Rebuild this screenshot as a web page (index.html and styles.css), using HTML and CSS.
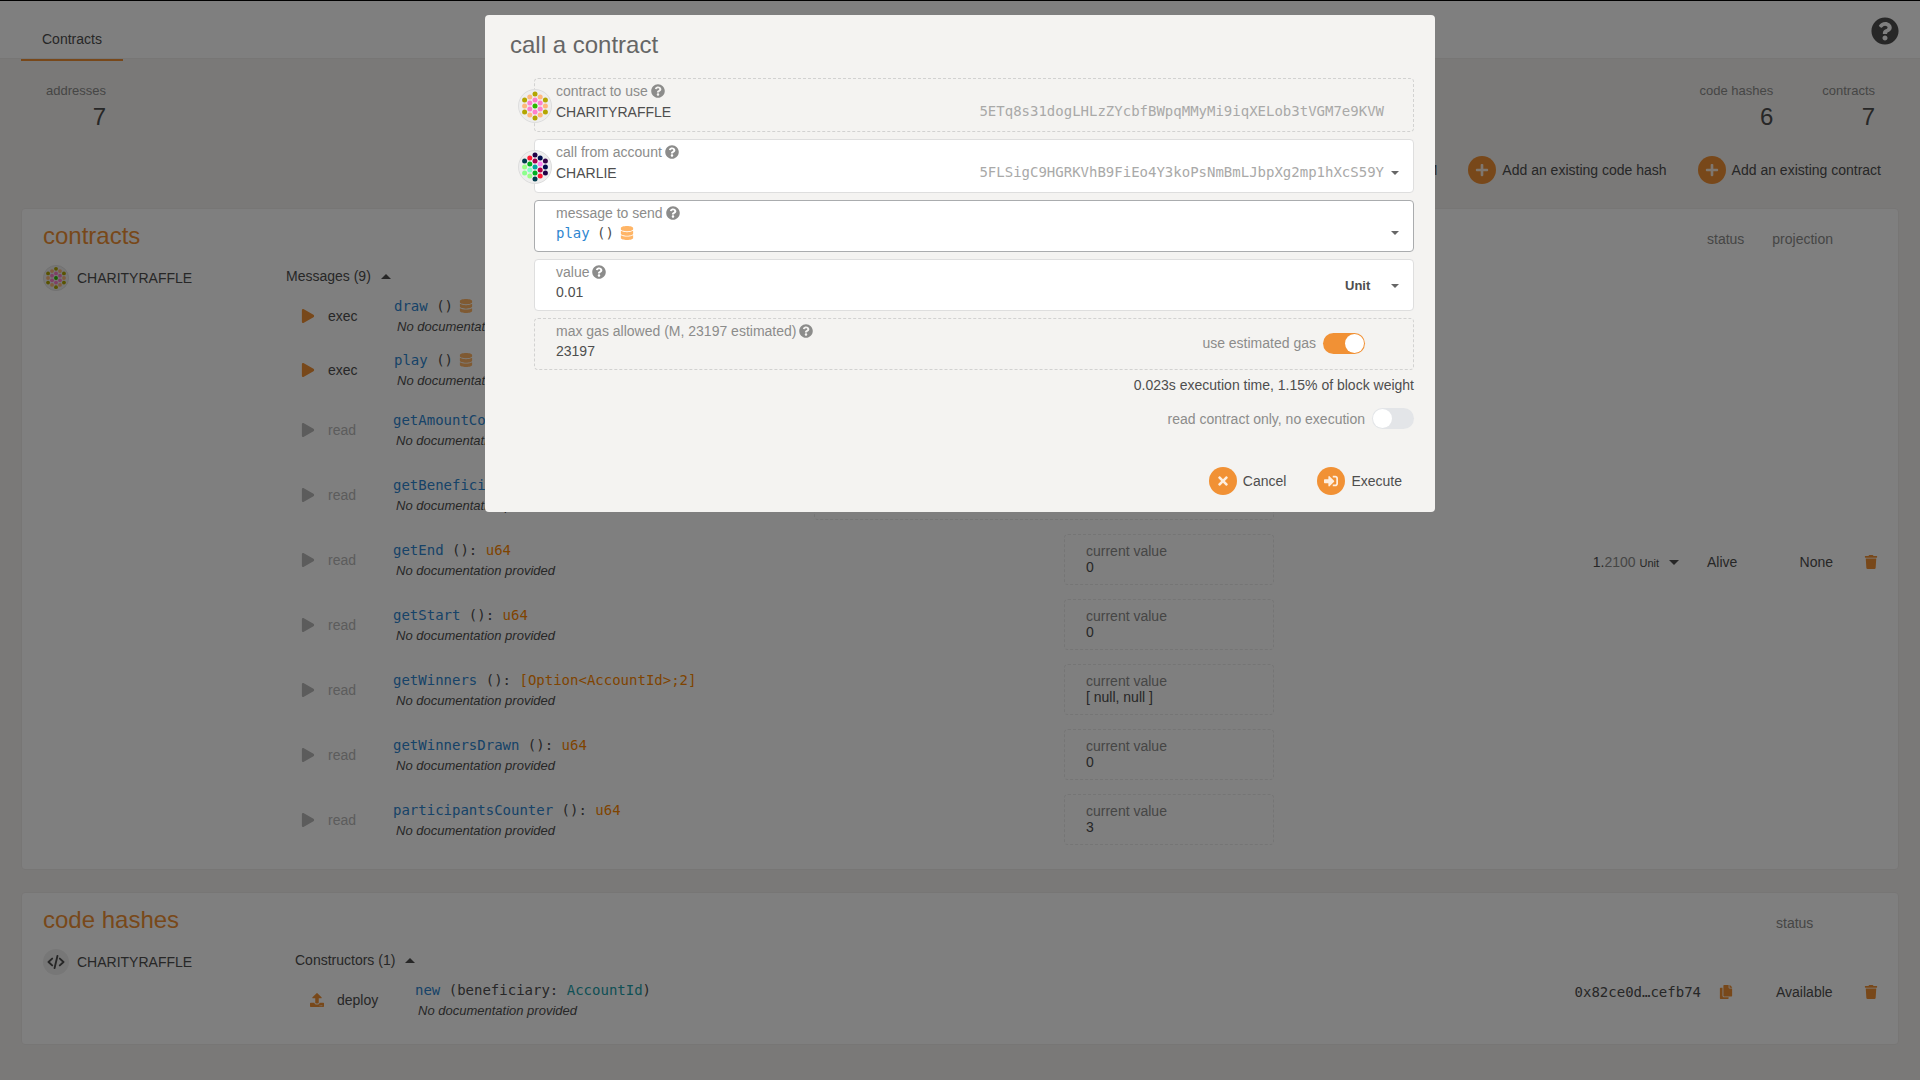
FILE: index.html
```html
<!DOCTYPE html>
<html lang="en">
<head>
<meta charset="utf-8">
<title>Contracts</title>
<link rel="stylesheet" href="styles.css">
</head>
<body>
<svg class="sprite" aria-hidden="true">
  <symbol id="help" viewBox="0 0 512 512"><path d="M504 256c0 136.997-111.043 248-248 248S8 392.997 8 256C8 119.083 119.043 8 256 8s248 111.083 248 248zM262.655 90c-54.497 0-89.255 22.957-116.549 63.758-3.536 5.286-2.353 12.415 2.715 16.258l34.699 26.31c5.205 3.947 12.621 3.008 16.665-2.122 17.864-22.658 30.113-35.797 57.303-35.797 20.429 0 45.698 13.148 45.698 32.958 0 14.976-12.363 22.667-32.534 33.976C247.128 238.528 216 254.941 216 296v4c0 6.627 5.373 12 12 12h56c6.627 0 12-5.373 12-12v-1.333c0-28.462 83.186-29.647 83.186-106.667 0-58.002-60.165-102-116.531-102zM256 338c-25.365 0-46 20.635-46 46 0 25.364 20.635 46 46 46s46-20.636 46-46c0-25.365-20.635-46-46-46z"/></symbol>
  <symbol id="database" viewBox="0 0 448 512"><path d="M448 73.143v45.714C448 159.143 347.667 192 224 192S0 159.143 0 118.857V73.143C0 32.857 100.333 0 224 0s224 32.857 224 73.143zM448 176v102.857C448 319.143 347.667 352 224 352S0 319.143 0 278.857V176c48.125 33.143 136.208 48.572 224 48.572S399.874 209.143 448 176zm0 160v102.857C448 479.143 347.667 512 224 512S0 479.143 0 438.857V336c48.125 33.143 136.208 48.572 224 48.572S399.874 369.143 448 336z"/></symbol>
  <symbol id="play" viewBox="0 0 448 512"><path d="M424.4 214.7L72.4 6.6C43.8-10.3 0 6.1 0 47.9V464c0 37.5 40.7 60.1 72.4 41.3l352-208c31.4-18.5 31.5-64.1 0-82.6z"/></symbol>
  <symbol id="times" viewBox="0 0 352 512"><path d="M242.72 256l100.07-100.07c12.28-12.28 12.28-32.19 0-44.48l-22.24-22.24c-12.28-12.28-32.19-12.28-44.48 0L176 189.28 75.93 89.21c-12.28-12.28-32.19-12.28-44.48 0L9.21 111.45c-12.28 12.28-12.28 32.19 0 44.48L109.28 256 9.21 356.07c-12.28 12.28-12.28 32.19 0 44.48l22.24 22.24c12.28 12.28 32.2 12.28 44.48 0L176 322.72l100.07 100.07c12.28 12.28 32.2 12.28 44.48 0l22.24-22.24c12.28-12.28 12.28-32.19 0-44.48L242.72 256z"/></symbol>
  <symbol id="plus" viewBox="0 0 448 512"><path d="M416 208H272V64c0-17.67-14.33-32-32-32h-32c-17.67 0-32 14.33-32 32v144H32c-17.67 0-32 14.33-32 32v32c0 17.67 14.33 32 32 32h144v144c0 17.67 14.33 32 32 32h32c17.67 0 32-14.33 32-32V304h144c17.67 0 32-14.33 32-32v-32c0-17.67-14.33-32-32-32z"/></symbol>
  <symbol id="sign-in" viewBox="0 0 512 512"><path d="M416 448h-84c-6.6 0-12-5.4-12-12v-40c0-6.6 5.4-12 12-12h84c17.7 0 32-14.3 32-32V160c0-17.7-14.3-32-32-32h-84c-6.6 0-12-5.4-12-12V76c0-6.6 5.4-12 12-12h84c53 0 96 43 96 96v192c0 53-43 96-96 96zm-47-201L201 79c-15-15-41-4.500-41 17v96H24c-13.300 0-24 10.700-24 24v96c0 13.300 10.700 24 24 24h136v96c0 21.500 26 32 41 17l168-168c9.300-9.400 9.300-24.600 0-34z"/></symbol>
  <symbol id="trash" viewBox="0 0 448 512"><path d="M432 32H312l-9.400-18.700A24 24 0 0 0 281.100 0H166.800a23.720 23.720 0 0 0-21.400 13.300L136 32H16A16 16 0 0 0 0 48v32a16 16 0 0 0 16 16h416a16 16 0 0 0 16-16V48a16 16 0 0 0-16-16zM53.200 467a48 48 0 0 0 47.900 45h245.800a48 48 0 0 0 47.900-45L416 128H32z"/></symbol>
  <symbol id="copy" viewBox="0 0 448 512"><path d="M320 448v40c0 13.255-10.745 24-24 24H24c-13.255 0-24-10.745-24-24V120c0-13.255 10.745-24 24-24h72v296c0 30.879 25.121 56 56 56h168zm0-344V0H152c-13.255 0-24 10.745-24 24v368c0 13.255 10.745 24 24 24h272c13.255 0 24-10.745 24-24V128H344c-13.200 0-24-10.800-24-24zm120.971-31.029L375.029 7.029A24 24 0 0 0 358.059 0H352v96h96v-6.059a24 24 0 0 0-7.029-16.970z"/></symbol>
  <symbol id="upload" viewBox="0 0 512 512"><path d="M296 384h-80c-13.300 0-24-10.700-24-24V192h-87.700c-17.800 0-26.700-21.500-14.100-34.100L242.300 5.700c7.500-7.500 19.800-7.500 27.300 0l152.200 152.200c12.600 12.600 3.700 34.100-14.100 34.100H320v168c0 13.300-10.700 24-24 24zm216-8v112c0 13.300-10.700 24-24 24H24c-13.300 0-24-10.700-24-24V376c0-13.300 10.700-24 24-24h136v8c0 30.900 25.100 56 56 56h80c30.900 0 56-25.100 56-56v-8h136c13.300 0 24 10.700 24 24zm-124 88c0-11-9-20-20-20s-20 9-20 20 9 20 20 20 20-9 20-20zm64 0c0-11-9-20-20-20s-20 9-20 20 9 20 20 20 20-9 20-20z"/></symbol>
  <symbol id="code" viewBox="0 0 640 512"><path d="M180 130L46 256l134 126M460 130l134 126-134 126M372 34L268 478" fill="none" stroke="currentColor" stroke-width="68" stroke-linecap="round" stroke-linejoin="round"/></symbol>
  <symbol id="caret-down" viewBox="0 0 8 4"><path d="M0 0h8L4 4z"/></symbol>
  <symbol id="caret-up" viewBox="0 0 8 4"><path d="M0 4h8L4 0z"/></symbol>
  <symbol id="raffle-id" viewBox="-17 -17 34 34">
    <circle r="16.500" fill="#eee" stroke="#ddd"/>
    <g fill="#b3a600"><circle cy="-12" r="2.500"/><circle cx="-10.400" cy="-6" r="2.500"/><circle cx="10.400" cy="-6" r="2.500"/><circle cx="-10.400" cy="6" r="2.500"/><circle cx="10.400" cy="6" r="2.500"/><circle cy="12" r="2.500"/></g>
    <g fill="#ffb87d"><circle cx="-5.200" cy="-9" r="2.500"/><circle cx="5.200" cy="-9" r="2.500"/><circle cx="-10.400" r="2.500"/><circle cx="10.400" r="2.500"/><circle cx="-5.200" cy="9" r="2.500"/><circle cx="5.200" cy="9" r="2.500"/></g>
    <g fill="#ff80cc"><circle cy="-6" r="2.500"/><circle cx="-5.200" cy="-3" r="2.500"/><circle cx="5.200" cy="-3" r="2.500"/><circle cx="-5.200" cy="3" r="2.500"/><circle cx="5.200" cy="3" r="2.500"/><circle cy="6" r="2.500"/></g>
    <circle r="2.500" fill="#2eb800"/>
  </symbol>
  <symbol id="charlie-id" viewBox="-17 -17 34 34">
    <circle r="16.500" fill="#eee" stroke="#ddd"/>
    <circle cy="-12" r="2.500" fill="#210047"/><circle cx="-5.200" cy="-9" r="2.500" fill="#ff1a33"/><circle cx="5.200" cy="-9" r="2.500" fill="#000f4d"/>
    <circle cx="-10.400" cy="-6" r="2.500" fill="#003d4d"/><circle cy="-6" r="2.500" fill="#a8004d"/><circle cx="10.400" cy="-6" r="2.500" fill="#330047"/>
    <circle cx="-5.200" cy="-3" r="2.500" fill="#00b01f"/><circle cx="5.200" cy="-3" r="2.500" fill="#ff80f0"/>
    <circle cx="-10.400" r="2.500" fill="#99ff85"/><circle r="2.500" fill="#00a8a0"/><circle cx="10.400" r="2.500" fill="#000a4d"/>
    <circle cx="-5.200" cy="3" r="2.500" fill="#85ffc2"/><circle cx="5.200" cy="3" r="2.500" fill="#b30047"/>
    <circle cx="-10.400" cy="6" r="2.500" fill="#8cff8c"/><circle cy="6" r="2.500" fill="#00b01f"/><circle cx="10.400" cy="6" r="2.500" fill="#210047"/>
    <circle cx="-5.200" cy="9" r="2.500" fill="#99ff85"/><circle cx="5.200" cy="9" r="2.500" fill="#ff1a33"/><circle cy="12" r="2.500" fill="#003d4d"/>
  </symbol>
</svg>

<header class="topbar">
  <nav class="tabs"><a class="tab" href="#contracts">Contracts</a></nav>
  <button class="icon-button topbar-help" type="button" aria-label="Help"><svg class="icon-large"><use href="#help"/></svg></button>
</header>

<main class="main">
  <section class="summary">
    <dl class="stat"><dt>addresses</dt><dd>7</dd></dl>
    <div class="summary-group">
      <dl class="stat"><dt>code hashes</dt><dd>6</dd></dl>
      <dl class="stat"><dt>contracts</dt><dd>7</dd></dl>
    </div>
  </section>

  <div class="actions">
    <button class="action" type="button"><span class="disc"><svg class="icon"><use href="#plus"/></svg></span>Upload WASM</button>
    <button class="action" type="button"><span class="disc"><svg class="icon"><use href="#plus"/></svg></span>Add an existing code hash</button>
    <button class="action" type="button"><span class="disc"><svg class="icon"><use href="#plus"/></svg></span>Add an existing contract</button>
  </div>

  <table class="card" id="contracts">
    <colgroup><col class="col-contract"><col><col class="col-balance"><col class="col-status"><col class="col-projection"><col class="col-remove"></colgroup>
    <thead>
      <tr><th class="card-title" colspan="3"><h1 class="title">contracts</h1></th><th>status</th><th class="align-right">projection</th><th></th></tr>
    </thead>
    <tbody>
      <tr>
        <td class="top indent"><div class="account"><svg class="badge"><use href="#raffle-id"/></svg>CHARITYRAFFLE</div></td>
        <td class="top">
          <button class="expander" type="button">Messages (9)<svg class="caret-wide"><use href="#caret-up"/></svg></button>
          <ul class="messages">
            <li class="message">
              <button class="run" type="button"><svg class="icon accent"><use href="#play"/></svg>exec</button>
              <div><div class="signature"><span class="fn">draw</span> () <svg class="icon storage"><use href="#database"/></svg></div><p class="doc">No documentation provided</p></div>
            </li>
            <li class="message">
              <button class="run" type="button"><svg class="icon accent"><use href="#play"/></svg>exec</button>
              <div><div class="signature"><span class="fn">play</span> () <svg class="icon storage"><use href="#database"/></svg></div><p class="doc">No documentation provided</p></div>
            </li>
            <li class="message readable">
              <button class="run" type="button" disabled><svg class="icon"><use href="#play"/></svg>read</button>
              <div><div class="signature"><span class="fn">getAmountCollected</span> (): <span class="type">u128</span></div><p class="doc">No documentation provided</p></div>
              <div class="result"><span>current value</span><output>0</output></div>
            </li>
            <li class="message readable">
              <button class="run" type="button" disabled><svg class="icon"><use href="#play"/></svg>read</button>
              <div><div class="signature"><span class="fn">getBeneficiary</span> (): <span class="type">AccountId</span></div><p class="doc">No documentation provided</p></div>
              <div class="result result-wide"><span>current value</span><output>CHARLIE</output></div>
            </li>
            <li class="message readable">
              <button class="run" type="button" disabled><svg class="icon"><use href="#play"/></svg>read</button>
              <div><div class="signature"><span class="fn">getEnd</span> (): <span class="type">u64</span></div><p class="doc">No documentation provided</p></div>
              <div class="result"><span>current value</span><output>0</output></div>
            </li>
            <li class="message readable">
              <button class="run" type="button" disabled><svg class="icon"><use href="#play"/></svg>read</button>
              <div><div class="signature"><span class="fn">getStart</span> (): <span class="type">u64</span></div><p class="doc">No documentation provided</p></div>
              <div class="result"><span>current value</span><output>0</output></div>
            </li>
            <li class="message readable">
              <button class="run" type="button" disabled><svg class="icon"><use href="#play"/></svg>read</button>
              <div><div class="signature"><span class="fn">getWinners</span> (): <span class="type">[Option&lt;AccountId&gt;;2]</span></div><p class="doc">No documentation provided</p></div>
              <div class="result"><span>current value</span><output>[ null, null ]</output></div>
            </li>
            <li class="message readable">
              <button class="run" type="button" disabled><svg class="icon"><use href="#play"/></svg>read</button>
              <div><div class="signature"><span class="fn">getWinnersDrawn</span> (): <span class="type">u64</span></div><p class="doc">No documentation provided</p></div>
              <div class="result"><span>current value</span><output>0</output></div>
            </li>
            <li class="message readable">
              <button class="run" type="button" disabled><svg class="icon"><use href="#play"/></svg>read</button>
              <div><div class="signature"><span class="fn">participantsCounter</span> (): <span class="type">u64</span></div><p class="doc">No documentation provided</p></div>
              <div class="result"><span>current value</span><output>3</output></div>
            </li>
          </ul>
        </td>
        <td class="balance"><button class="expander" type="button"><span>1.<span class="decimals">2100</span> <small class="unit">Unit</small></span><svg class="caret-wide"><use href="#caret-down"/></svg></button></td>
        <td>Alive</td>
        <td class="align-right">None</td>
        <td class="remove"><button class="icon-button accent" type="button" aria-label="Forget contract"><svg class="icon"><use href="#trash"/></svg></button></td>
      </tr>
    </tbody>
  </table>

  <table class="card">
    <colgroup><col class="col-code"><col><col class="col-hash"><col class="col-available"><col class="col-remove"></colgroup>
    <thead>
      <tr><th class="card-title" colspan="3"><h1 class="title">code hashes</h1></th><th>status</th><th></th></tr>
    </thead>
    <tbody>
      <tr>
        <td class="top indent"><div class="account"><span class="badge badge-code"><svg class="icon-code"><use href="#code"/></svg></span>CHARITYRAFFLE</div></td>
        <td class="top">
          <button class="expander" type="button">Constructors (1)<svg class="caret-wide"><use href="#caret-up"/></svg></button>
          <ul class="messages">
            <li class="message constructor">
              <button class="run" type="button"><svg class="icon accent"><use href="#upload"/></svg>deploy</button>
              <div><div class="signature"><span class="fn">new</span> (beneficiary: <span class="param">AccountId</span>)</div><p class="doc">No documentation provided</p></div>
            </li>
          </ul>
        </td>
        <td><div class="hash"><span class="mono">0x82ce0d…cefb74</span><button class="icon-button accent" type="button" aria-label="Copy hash"><svg class="icon"><use href="#copy"/></svg></button></div></td>
        <td>Available</td>
        <td class="remove"><button class="icon-button accent" type="button" aria-label="Forget code hash"><svg class="icon"><use href="#trash"/></svg></button></td>
      </tr>
    </tbody>
  </table>
</main>

<div class="overlay">
  <form class="modal" role="dialog" aria-modal="true" aria-labelledby="modal-title">
    <h1 class="modal-title" id="modal-title">call a contract</h1>
    <div class="fields">
      <div class="field field-account field-static">
        <svg class="identicon"><use href="#raffle-id"/></svg>
        <label class="label" for="contract">contract to use<svg class="icon"><use href="#help"/></svg></label>
        <input class="value" id="contract" value="CHARITYRAFFLE" readonly>
        <span class="address">5ETq8s31dogLHLzZYcbfBWpqMMyMi9iqXELob3tVGM7e9KVW</span>
      </div>
      <div class="field field-account">
        <svg class="identicon"><use href="#charlie-id"/></svg>
        <label class="label" for="account">call from account<svg class="icon"><use href="#help"/></svg></label>
        <select class="value" id="account"><option>CHARLIE</option></select>
        <span class="address">5FLSigC9HGRKVhB9FiEo4Y3koPsNmBmLJbpXg2mp1hXcS59Y</span>
        <svg class="caret"><use href="#caret-down"/></svg>
      </div>
      <div class="field field-active">
        <label class="label" for="message">message to send<svg class="icon"><use href="#help"/></svg></label>
        <select class="value mono fn" id="message"><option>play</option></select>
        <span class="arguments mono">()<svg class="icon storage"><use href="#database"/></svg></span>
        <svg class="caret"><use href="#caret-down"/></svg>
      </div>
      <div class="field">
        <label class="label" for="amount">value<svg class="icon"><use href="#help"/></svg></label>
        <input class="value value-half" id="amount" value="0.01">
        <div class="unit-picker">
          <select class="unit-select" aria-label="Unit"><option>Unit</option></select>
          <svg class="caret"><use href="#caret-down"/></svg>
        </div>
      </div>
      <div class="field field-static">
        <label class="label" for="gas">max gas allowed (M, 23197 estimated)<svg class="icon"><use href="#help"/></svg></label>
        <input class="value value-half" id="gas" value="23197" readonly>
        <label class="toggle toggle-inset">use estimated gas<input class="switch" type="checkbox" checked></label>
      </div>
      <p class="weight">0.023s execution time, 1.15% of block weight</p>
      <label class="toggle toggle-row">read contract only, no execution<input class="switch" type="checkbox"></label>
    </div>
    <div class="modal-actions">
      <button class="action" type="button"><span class="disc"><svg class="icon"><use href="#times"/></svg></span>Cancel</button>
      <button class="action" type="button"><span class="disc"><svg class="icon"><use href="#sign-in"/></svg></span>Execute</button>
    </div>
  </form>
</div>
</body>
</html>
```

FILE: styles.css
```css
:root {
  --accent: #f19135;
  --text: #4e4e4e;
  --muted: #8c8c8b;
  --page: #f5f3f1;
  --line: #eeecea;
}

* { box-sizing: border-box; }

body {
  margin: 0;
  border-top: 1px solid #000;
  background: var(--page);
  color: var(--text);
  font: 14px/20px "Liberation Sans", Arial, sans-serif;
}

h1, p, dl, dd, ul { margin: 0; padding: 0; font-weight: 400; }
ul { list-style: none; }

button, input, select {
  margin: 0;
  padding: 0;
  border: 0;
  background: none;
  color: inherit;
  font: inherit;
  outline: 0;
}

select { appearance: none; }

svg { display: block; flex: none; fill: currentColor; }

.sprite { position: absolute; width: 0; height: 0; }
.icon { width: 14px; height: 14px; }
.icon-large { width: 28px; height: 28px; }
.icon-code { width: 18px; height: 14px; }
.caret { width: 8px; height: 4px; }
.caret-wide { width: 10px; height: 5px; }
.accent { color: var(--accent); }
.mono { font-family: "DejaVu Sans Mono", monospace; }
.fn { color: #2e86d0; }
.type { color: #ff8800; }
.param { color: #21a0aa; }
.storage { color: #ffb566; }
.align-right { text-align: right; }
.icon-button { display: block; }

/* Top bar */
.topbar {
  display: flex;
  align-items: flex-start;
  justify-content: space-between;
  height: 58px;
  padding: 0 21px;
  border-bottom: 1px solid var(--line);
  background: #fff;
}

.tab {
  display: block;
  padding: 28px 21px 10px;
  border-bottom: 2px solid var(--accent);
  color: inherit;
  text-decoration: none;
}

.topbar-help { margin-top: 16px; }

/* Summary */
.main { padding: 0 21px 34px; }

.summary {
  display: flex;
  justify-content: space-between;
  padding: 23px 24px 0 25px;
}

.summary-group { display: flex; gap: 49px; }
.stat { text-align: right; }
.stat dt { color: var(--muted); font-size: 13px; line-height: 18px; }
.stat dd { font-size: 24px; line-height: 34px; }

.actions {
  display: flex;
  justify-content: flex-end;
  gap: 31px;
  padding: 22px 18px 24px;
}

.action { display: flex; align-items: center; gap: 6px; }

.disc {
  display: grid;
  place-items: center;
  width: 28px;
  height: 28px;
  border-radius: 50%;
  background: var(--accent);
  color: #fdeee0;
}

/* Cards */
.card {
  width: 100%;
  margin-bottom: 22px;
  border: 1px solid var(--line);
  border-radius: 4px;
  border-spacing: 0;
  background: #fff;
  table-layout: fixed;
}

.card th {
  padding: 11px 0 3px;
  color: var(--muted);
  font-weight: 400;
  text-align: left;
  vertical-align: baseline;
}

.card th.align-right { text-align: right; }
.card th.card-title { padding-left: 21px; }
.title { color: var(--accent); font-size: 24px; line-height: 32px; }

.card td { padding: 0; vertical-align: middle; }
.card td.top { padding: 10px 0 17px; vertical-align: top; }
.card td.indent { padding-left: 21px; }
.card td.balance { padding-right: 28px; }
.balance .expander { margin-left: auto; }
.card td.remove { padding-right: 20px; }
.remove .icon-button { margin-left: auto; }

.col-contract { width: 264px; }
.col-balance { width: 433px; }
.col-status { width: 43px; }
.col-projection { width: 83px; }
.col-remove { width: 65px; }
.col-code { width: 273px; }
.col-hash { width: 433px; }
.col-available { width: 57px; }

.account { display: flex; align-items: center; gap: 8px; }
.badge { width: 26px; height: 26px; }

.badge-code {
  display: grid;
  place-items: center;
  border-radius: 50%;
  background: #eee;
}

.expander { display: flex; align-items: center; gap: 10px; height: 22px; }
.decimals { color: var(--muted); }
.unit { font-size: 11px; }

.hash {
  display: flex;
  align-items: center;
  justify-content: flex-end;
  gap: 18px;
  padding-right: 43px;
}

/* Messages */
.messages { padding-top: 2px; }

.message {
  display: grid;
  grid-template-columns: 108px 1fr auto;
  align-items: center;
  height: 54px;
}

.readable { grid-template-columns: 107px 1fr auto; height: 65px; }
.constructor { grid-template-columns: 120px 1fr auto; }

.run { display: flex; align-items: center; gap: 13px; padding-left: 15px; }
.run:disabled { color: #b8b8b8; }

.signature {
  display: flex;
  align-items: center;
  font-family: "DejaVu Sans Mono", monospace;
  line-height: 22px;
  white-space: pre;
}

.signature .storage { margin-left: -2px; }
.doc { padding-left: 3px; font-size: 13px; font-style: italic; }

.result {
  display: flex;
  flex-direction: column;
  min-width: 210px;
  padding: 8px 21px 9px;
  border: 1px dashed #eaeaea;
  border-radius: 4px;
  line-height: 16px;
}

.result span { color: var(--muted); }
.result-wide { min-width: 460px; }

/* Modal */
.overlay {
  position: fixed;
  inset: 0;
  display: flex;
  align-items: flex-start;
  justify-content: center;
  padding-top: 15px;
  background: rgba(0, 0, 0, 0.5);
}

.modal {
  width: 100%;
  max-width: 950px;
  padding: 14px 21px 17px 25px;
  border-radius: 4px;
  background: #f4f3f1;
}

.modal-title { color: #666; font-size: 24px; line-height: 32px; }

.fields {
  display: flex;
  flex-direction: column;
  gap: 7px;
  padding: 17px 0 0 24px;
}

.field {
  position: relative;
  display: grid;
  grid-template-columns: 1fr auto;
  grid-template-rows: 16px 24px;
  align-items: center;
  padding: 4px 14px 6px 21px;
  border: 1px solid #dedede;
  border-radius: 4px;
  background: #fff;
}

.field-account { grid-template-rows: 16px 26px; }
.field-static { border: 1px dashed #d2d2d1; background: none; }
.field-active { border-color: #aaacae; }

.identicon {
  position: absolute;
  left: -17px;
  top: 10px;
  width: 34px;
  height: 34px;
}

.label {
  display: flex;
  grid-area: 1 / 1;
  align-items: center;
  gap: 3px;
  color: var(--muted);
  line-height: 16px;
}

.value { grid-area: 2 / 1 / 3 / 3; width: 100%; }
.value-half { grid-area: 2 / 1; }

.address {
  grid-area: 2 / 2;
  padding: 0 15px 2px 0;
  color: #a9a9a8;
  font-family: "DejaVu Sans Mono", monospace;
  pointer-events: none;
}

.arguments {
  display: flex;
  grid-area: 2 / 1;
  align-items: center;
  gap: 6px;
  padding-left: 41px;
  pointer-events: none;
}

.field .caret { grid-area: 2 / 2; justify-self: end; color: #666; pointer-events: none; }

.unit-picker {
  display: grid;
  grid-area: 1 / 2 / 3 / 3;
  align-items: center;
  padding-top: 3px;
}

.unit-select {
  grid-area: 1 / 1;
  width: 54px;
  font-size: 13px;
  font-weight: 700;
}

.unit-picker .caret { grid-area: 1 / 1; }

.toggle {
  display: flex;
  align-items: center;
  justify-content: flex-end;
  gap: 7px;
  color: var(--muted);
}

.toggle-inset { grid-area: 1 / 2 / 3 / 3; margin-right: 34px; }
.toggle-row { margin-top: 8px; }
.weight { line-height: 16px; text-align: right; }

.switch {
  display: flex;
  width: 42px;
  height: 21px;
  padding: 1px;
  border-radius: 11px;
  background: #e3e5e8;
  appearance: none;
}

.switch::before {
  content: "";
  width: 19px;
  height: 19px;
  border-radius: 50%;
  background: #fff;
}

.switch:checked { justify-content: flex-end; background: var(--accent); }

.modal-actions {
  display: flex;
  justify-content: flex-end;
  gap: 31px;
  padding: 38px 12px 0 0;
}
```
